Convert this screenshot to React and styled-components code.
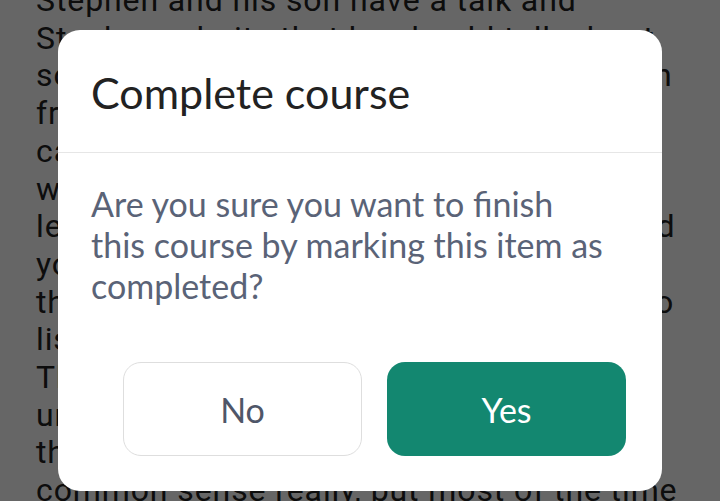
import React from "react";
import styled, { createGlobalStyle } from "styled-components";

const Global = createGlobalStyle`
  html, body { margin: 0; padding: 0; background: #ffffff; }
  body { overflow: hidden; width: 720px; height: 501px; }
  #root { width: 720px; height: 501px; }
`;

const Page = styled.div`
  width: 720px;
  height: 501px;
  overflow: hidden;
  background: #ffffff;
  position: relative;
`;

const Article = styled.p`
  margin: -18px 0 0 0;
  padding: 0 36px;
  font-family: Roboto, "Liberation Sans", sans-serif;
  font-size: 32px;
  letter-spacing: 0.9px;
  line-height: 37.7px;
  color: #222222;
  white-space: pre;
`;

const Overlay = styled.div`
  position: absolute;
  inset: 0;
  background: rgba(0, 0, 0, 0.6);
  display: flex;
  justify-content: center;
  align-items: flex-start;
  padding-top: 30px;
  box-sizing: border-box;
`;

const Dialog = styled.div`
  width: 604px;
  height: 461px;
  background: #ffffff;
  border-radius: 22px;
  display: flex;
  flex-direction: column;
  font-family: Lato, "Open Sans", sans-serif;
  box-sizing: border-box;
`;

const Header = styled.div`
  height: 123px;
  box-sizing: border-box;
  padding: 35px 33px 0 33px;
  border-bottom: 1px solid #e6e6e6;
`;

const Title = styled.h2`
  margin: 0;
  font-size: 43px;
  font-weight: 400;
  line-height: 56px;
  color: #222222;
`;

const Body = styled.div`
  padding: 30px 55px 0 33px;
  flex: 1;
`;

const Message = styled.p`
  margin: 0;
  font-size: 34px;
  line-height: 41px;
  color: #5a6377;
`;

const Footer = styled.div`
  display: flex;
  justify-content: flex-end;
  gap: 25px;
  padding: 0 36px 35px 36px;
`;

const Button = styled.button`
  width: 239px;
  height: 94px;
  border-radius: 18px;
  font-family: Lato, "Open Sans", sans-serif;
  font-size: 34px;
  font-weight: 400;
  cursor: pointer;
  box-sizing: border-box;
  border: ${(p) => (p.$primary ? "none" : "1.5px solid #dedede")};
  background: ${(p) => (p.$primary ? "#138770" : "#ffffff")};
  color: ${(p) => (p.$primary ? "#ffffff" : "#4f5668")};
`;

const story = [
  "Stephen and his son have a talk and",
  "Stephen admits that he should talk about",
  "some of the things he should have done in",
  "front of his son when he was younger. He",
  "can be a real role model for their kids",
  "when it comes to the things they teach",
  "learn together, so don't be afraid to be wild",
  "your own way. Listen to your children and",
  "this is how they will learn to really listen to",
  "listening to others as well.",
  "This advice might seem hard to",
  "understand at first, but as time goes on",
  "this will become easier for everyone, it's",
  "common sense really, but most of the time",
].join("\n");

export default function App() {
  return (
    <>
      <Global />
      <Page>
        <Article>{story}</Article>
        <Overlay>
          <Dialog role="dialog" aria-modal="true">
            <Header>
              <Title>Complete course</Title>
            </Header>
            <Body>
              <Message>
                Are you sure you want to finish this course by marking this item as completed?
              </Message>
            </Body>
            <Footer>
              <Button>No</Button>
              <Button $primary>Yes</Button>
            </Footer>
          </Dialog>
        </Overlay>
      </Page>
    </>
  );
}
